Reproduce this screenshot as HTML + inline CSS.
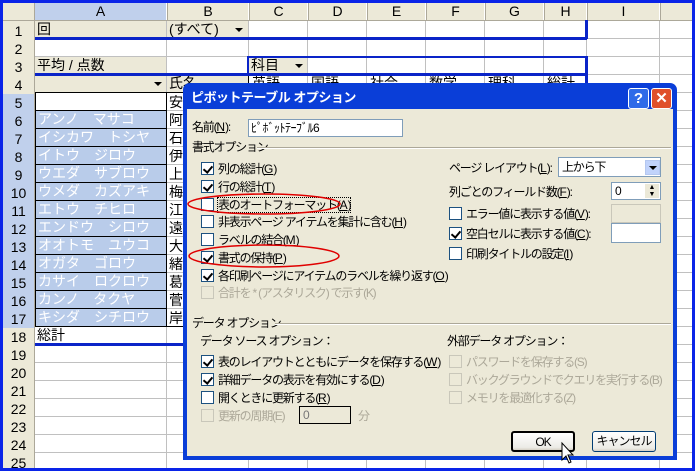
<!DOCTYPE html>
<html><head><meta charset="utf-8"><style>
*{margin:0;padding:0;box-sizing:border-box}
body{width:695px;height:471px;overflow:hidden;background:#fff;position:relative;font-family:"Liberation Sans","Noto Sans CJK JP",sans-serif;font-size:13px;color:#000}
.a{position:absolute;white-space:nowrap}
.hd{position:absolute;background:#ECE9D8;text-align:center;font-size:14px;line-height:17px;color:#000}
.c{position:absolute;font-size:14px;line-height:17px;padding-left:2px;overflow:hidden}
.sel{background:#B9CCEA;color:#fff;border:1px solid #000}
.fb{background:#ECE9D8}
.dd{position:absolute;width:14px;height:14px;background:#ECE9D8}
.dd:after{content:"";position:absolute;left:3px;top:5px;border-left:4px solid transparent;border-right:4px solid transparent;border-top:4px solid #000}
.dlg{position:absolute;left:183px;top:83px;width:494px;height:377px;background:#0A3ED8;border-radius:7px 7px 0 0}
.body{position:absolute;left:4px;top:26px;width:486px;height:347px;background:#ECE9D8}
.t{position:absolute;font-size:12px;line-height:14px;white-space:nowrap;letter-spacing:-1.2px;font-family:"Liberation Sans","WenQuanYi Zen Hei","Noto Sans CJK JP",sans-serif}
.t u{letter-spacing:0}
.cb{position:absolute;width:13px;height:13px;background:#fff;border:1px solid #1C5180}
.cb.k:after{content:"";position:absolute;left:3px;top:1px;width:4px;height:7px;border:solid #000;border-width:0 2px 2px 0;transform:rotate(40deg)}
.cb.g{border-color:#C9C7BA;background:#ECE9D8}
.gr{color:#ACA899}
.tb{position:absolute;background:#fff;border:1px solid #7F9DB9}
.btn{position:absolute;border:1px solid #003C74;border-radius:3px;background:linear-gradient(#fff,#ECEBE6 85%,#D6D0C5);font-size:12px;text-align:center;line-height:19px;letter-spacing:-1px}
</style></head><body>
<svg class="a" style="left:0;top:0" width="695" height="471">
<g stroke="#C0C0C0" stroke-width="1">
<line x1="34" y1="38.5" x2="695" y2="38.5"/><line x1="34" y1="56.5" x2="695" y2="56.5"/><line x1="34" y1="74.5" x2="695" y2="74.5"/><line x1="34" y1="92.5" x2="695" y2="92.5"/>
<line x1="34" y1="110.5" x2="695" y2="110.5"/><line x1="34" y1="128.5" x2="695" y2="128.5"/><line x1="34" y1="146.5" x2="695" y2="146.5"/><line x1="34" y1="164.5" x2="695" y2="164.5"/><line x1="34" y1="182.5" x2="695" y2="182.5"/><line x1="34" y1="200.5" x2="695" y2="200.5"/><line x1="34" y1="218.5" x2="695" y2="218.5"/><line x1="34" y1="236.5" x2="695" y2="236.5"/><line x1="34" y1="254.5" x2="695" y2="254.5"/><line x1="34" y1="272.5" x2="695" y2="272.5"/><line x1="34" y1="290.5" x2="695" y2="290.5"/><line x1="34" y1="308.5" x2="695" y2="308.5"/><line x1="34" y1="326.5" x2="695" y2="326.5"/><line x1="34" y1="344.5" x2="695" y2="344.5"/><line x1="34" y1="362.5" x2="695" y2="362.5"/><line x1="34" y1="380.5" x2="695" y2="380.5"/><line x1="34" y1="398.5" x2="695" y2="398.5"/><line x1="34" y1="416.5" x2="695" y2="416.5"/><line x1="34" y1="434.5" x2="695" y2="434.5"/><line x1="34" y1="452.5" x2="695" y2="452.5"/>
<line x1="166.5" y1="20" x2="166.5" y2="471"/><line x1="248.5" y1="20" x2="248.5" y2="471"/><line x1="307.5" y1="20" x2="307.5" y2="471"/><line x1="366.5" y1="20" x2="366.5" y2="471"/><line x1="425.5" y1="20" x2="425.5" y2="471"/><line x1="484.5" y1="20" x2="484.5" y2="471"/><line x1="543.5" y1="20" x2="543.5" y2="471"/><line x1="586.5" y1="20" x2="586.5" y2="471"/><line x1="659.5" y1="20" x2="659.5" y2="471"/>
</g>
<g stroke="#ACA899"><line x1="0" y1="20.5" x2="695" y2="20.5"/><line x1="34.5" y1="0" x2="34.5" y2="471"/></g>
</svg>
<div class="hd" style="left:3px;top:3px;width:31px;height:17px"></div>
<div class="hd" style="left:35px;top:3px;width:131px;height:17px;background:#C0D0EC">A</div>
<div class="hd" style="left:167px;top:3px;width:81px;height:17px;border-left:1px solid #ACA899">B</div>
<div class="hd" style="left:249px;top:3px;width:58px;height:17px;border-left:1px solid #ACA899">C</div>
<div class="hd" style="left:308px;top:3px;width:58px;height:17px;border-left:1px solid #ACA899">D</div>
<div class="hd" style="left:367px;top:3px;width:58px;height:17px;border-left:1px solid #ACA899">E</div>
<div class="hd" style="left:426px;top:3px;width:58px;height:17px;border-left:1px solid #ACA899">F</div>
<div class="hd" style="left:485px;top:3px;width:58px;height:17px;border-left:1px solid #ACA899">G</div>
<div class="hd" style="left:544px;top:3px;width:42px;height:17px;border-left:1px solid #ACA899">H</div>
<div class="hd" style="left:587px;top:3px;width:72px;height:17px;border-left:1px solid #ACA899">I</div>
<div class="hd" style="left:660px;top:3px;width:35px;height:17px;border-left:1px solid #ACA899"></div>
<div class="hd" style="left:3px;top:21px;width:31px;height:450px;line-height:18px;padding-top:1px">1<br>2<br>3<br>4<br><span style="display:block;background:#C0D0EC">5<br>6<br>7<br>8<br>9<br>10<br>11<br>12<br>13<br>14<br>15<br>16<br>17</span>18<br>19<br>20<br>21<br>22<br>23<br>24<br>25</div>
<div class="c fb" style="left:35px;top:21px;width:131px;height:17px">回</div>
<div class="c fb" style="left:167px;top:21px;width:81px;height:17px">(すべて)</div><div class="dd" style="left:232px;top:23px"></div>
<div class="c fb" style="left:35px;top:57px;width:131px;height:17px">平均 / 点数</div>
<div class="c fb" style="left:249px;top:57px;width:58px;height:17px">科目</div><div class="dd" style="left:292px;top:59px"></div>
<div class="c fb" style="left:35px;top:75px;width:131px;height:17px"></div><div class="dd" style="left:151px;top:77px"></div>
<div class="c fb" style="left:167px;top:75px;width:81px;height:17px">氏名</div>
<div class="a" style="left:248px;top:74px;width:339px;height:19px;border:1px solid #000"></div>
<div class="c" style="left:250px;top:75px">英語</div><div class="c" style="left:309px;top:75px">国語</div><div class="c" style="left:368px;top:75px">社会</div><div class="c" style="left:427px;top:75px">数学</div><div class="c" style="left:486px;top:75px">理科</div><div class="c" style="left:545px;top:75px">総計</div>
<div class="a" style="left:35px;top:37px;width:552px;height:3px;background:#0A24C8"></div>
<div class="a" style="left:585px;top:20px;width:3px;height:19px;background:#0A24C8"></div>
<div class="a" style="left:35px;top:73px;width:552px;height:3px;background:#0A24C8"></div>
<div class="a" style="left:247px;top:56px;width:340px;height:2px;background:#0A24C8"></div>
<div class="a" style="left:247px;top:56px;width:2px;height:19px;background:#0A24C8"></div>
<div class="a" style="left:585px;top:56px;width:3px;height:37px;background:#0A24C8"></div>
<div class="c" style="left:35px;top:92px;width:132px;height:19px;border:1px solid #000;background:#fff"></div>
<div class="c sel" style="left:35px;top:110px;width:132px;height:19px">アンノ　マサコ</div>
<div class="c sel" style="left:35px;top:128px;width:132px;height:19px">イシカワ　トシヤ</div>
<div class="c sel" style="left:35px;top:146px;width:132px;height:19px">イトウ　ジロウ</div>
<div class="c sel" style="left:35px;top:164px;width:132px;height:19px">ウエダ　サブロウ</div>
<div class="c sel" style="left:35px;top:182px;width:132px;height:19px">ウメダ　カズアキ</div>
<div class="c sel" style="left:35px;top:200px;width:132px;height:19px">エトウ　チヒロ</div>
<div class="c sel" style="left:35px;top:218px;width:132px;height:19px">エンドウ　シロウ</div>
<div class="c sel" style="left:35px;top:236px;width:132px;height:19px">オオトモ　ユウコ</div>
<div class="c sel" style="left:35px;top:254px;width:132px;height:19px">オガタ　ゴロウ</div>
<div class="c sel" style="left:35px;top:272px;width:132px;height:19px">カサイ　ロクロウ</div>
<div class="c sel" style="left:35px;top:290px;width:132px;height:19px">カンノ　タクヤ</div>
<div class="c sel" style="left:35px;top:308px;width:132px;height:19px">キシダ　シチロウ</div>
<div class="a" style="left:166px;top:92px;width:30px;height:235px;border:1px solid #000;border-right:none;font-size:14px;line-height:18px;padding-left:2px">安<br>阿<br>石<br>伊<br>上<br>梅<br>江<br>遠<br>大<br>緒<br>葛<br>菅<br>岸</div>
<div class="c" style="left:35px;top:327px">総計</div>
<div class="a" style="left:35px;top:343px;width:150px;height:3px;background:#0A24C8"></div>
<div class="a" style="left:0;top:0;width:695px;height:471px;border:3px solid #0A24E8"></div>
<div class="dlg">
<div class="t" style="left:8px;top:8px;color:#fff;font-weight:bold;font-size:13px;letter-spacing:-0.5px">ピボットテーブル オプション</div>
<div class="a" style="left:445px;top:5px;width:21px;height:21px;background:#2F6BE8;border:1px solid #fff;border-radius:3px;color:#fff;font-weight:bold;text-align:center;line-height:19px;font-size:15px">?</div>
<div class="a" style="left:468px;top:5px;width:21px;height:21px;background:#E0502A;border:1px solid #fff;border-radius:3px;color:#fff;font-weight:bold;text-align:center;line-height:19px;font-size:15px">✕</div>
<div class="body">
<div class="t" style="left:5px;top:11px">名前(<u>N</u>):</div>
<div class="tb" style="left:61px;top:10px;width:155px;height:18px"><span class="t" style="left:2px;top:1px;letter-spacing:-0.5px">ﾋﾟﾎﾞｯﾄﾃｰﾌﾞﾙ6</span></div>
<div class="t" style="left:5px;top:31px">書式オプション</div>
<div class="a" style="left:70px;top:38px;width:414px;height:2px;border-top:1px solid #ACA899;border-bottom:1px solid #fff"></div>
<div class="cb k" style="left:14px;top:53px"></div><div class="t" style="left:31px;top:53px">列の総計(<u>G</u>)</div>
<div class="cb k" style="left:14px;top:71px"></div><div class="t" style="left:31px;top:71px">行の総計(<u>T</u>)</div>
<div class="cb" style="left:14px;top:89px"></div><div class="t" style="left:31px;top:89px;outline:1px dotted #000">表のオートフォーマット(<u>A</u>)</div>
<div class="cb" style="left:14px;top:106px"></div><div class="t" style="left:31px;top:106px">非表示ページ アイテムを集計に含む(<u>H</u>)</div>
<div class="cb" style="left:14px;top:124px"></div><div class="t" style="left:31px;top:124px">ラベルの結合(<u>M</u>)</div>
<div class="cb k" style="left:14px;top:142px"></div><div class="t" style="left:31px;top:142px">書式の保持(<u>P</u>)</div>
<div class="cb k" style="left:14px;top:160px"></div><div class="t" style="left:31px;top:160px">各印刷ページにアイテムのラベルを繰り返す(<u>O</u>)</div>
<div class="cb g" style="left:14px;top:177px"></div><div class="t gr" style="left:31px;top:177px">合計を * (アスタリスク) で示す(K)</div>
<div class="t" style="left:262px;top:52px">ページ レイアウト(<u>L</u>):</div>
<div class="tb" style="left:371px;top:48px;width:103px;height:20px"><span class="t" style="left:3px;top:2px">上から下</span><div class="dd" style="left:86px;top:2px;width:15px;height:15px;border:1px solid #B5C8F0;background:#C1D3FB"></div></div>
<div class="t" style="left:262px;top:76px">列ごとのフィールド数(<u>F</u>):</div>
<div class="tb" style="left:424px;top:73px;width:50px;height:18px"><span class="t" style="left:3px;top:1px">0</span><div class="a" style="left:33px;top:1px;width:14px;height:14px;background:#ECE9D8;font-size:7px;line-height:7px;text-align:center">▲<br>▼</div></div>
<div class="cb" style="left:262px;top:98px"></div><div class="t" style="left:279px;top:98px">エラー値に表示する値(<u>V</u>):</div>
<div class="tb" style="left:424px;top:95px;width:50px;height:19px;background:#ECE9D8;border-color:#C9C7BA"></div>
<div class="cb k" style="left:262px;top:118px"></div><div class="t" style="left:279px;top:118px">空白セルに表示する値(<u>C</u>):</div>
<div class="tb" style="left:424px;top:114px;width:50px;height:20px"></div>
<div class="cb" style="left:262px;top:138px"></div><div class="t" style="left:279px;top:138px">印刷タイトルの設定(<u>I</u>)</div>
<div class="t" style="left:5px;top:207px">データ オプション</div>
<div class="a" style="left:88px;top:214px;width:396px;height:2px;border-top:1px solid #ACA899;border-bottom:1px solid #fff"></div>
<div class="t" style="left:13px;top:225px">データ ソース オプション：</div>
<div class="cb k" style="left:14px;top:246px"></div><div class="t" style="left:31px;top:246px">表のレイアウトとともにデータを保存する(<u>W</u>)</div>
<div class="cb k" style="left:14px;top:264px"></div><div class="t" style="left:31px;top:264px">詳細データの表示を有効にする(<u>D</u>)</div>
<div class="cb" style="left:14px;top:282px"></div><div class="t" style="left:31px;top:282px">開くときに更新する(<u>R</u>)</div>
<div class="cb g" style="left:14px;top:300px"></div><div class="t gr" style="left:31px;top:300px">更新の周期(E)</div>
<div class="tb" style="left:112px;top:297px;width:52px;height:18px;background:#ECE9D8;border-color:#000"><span class="t" style="left:3px;top:1px;color:#777">0</span></div>
<div class="t gr" style="left:171px;top:300px">分</div>
<div class="t" style="left:260px;top:225px">外部データ オプション：</div>
<div class="cb g" style="left:262px;top:246px"></div><div class="t gr" style="left:279px;top:246px">パスワードを保存する(S)</div>
<div class="cb g" style="left:262px;top:264px"></div><div class="t gr" style="left:279px;top:264px">バックグラウンドでクエリを実行する(B)</div>
<div class="cb g" style="left:262px;top:282px"></div><div class="t gr" style="left:279px;top:282px">メモリを最適化する(Z)</div>
<div class="btn" style="left:324px;top:322px;width:64px;height:21px;border:2px solid #000">OK</div>
<div class="btn" style="left:405px;top:322px;width:64px;height:21px">キャンセル</div>
</div></div>
<svg class="a" style="left:0;top:0" width="695" height="471">
<ellipse cx="264" cy="204" rx="76" ry="10" fill="none" stroke="#E00000" stroke-width="1.5"/>
<ellipse cx="264" cy="256" rx="75" ry="11" fill="none" stroke="#E00000" stroke-width="1.5"/>
<path d="M562 443 L562 460 L566 456 L569 463 L571 462 L568 455 L573 455 Z" fill="#fff" stroke="#000" stroke-width="1"/>
</svg>
</body></html>
